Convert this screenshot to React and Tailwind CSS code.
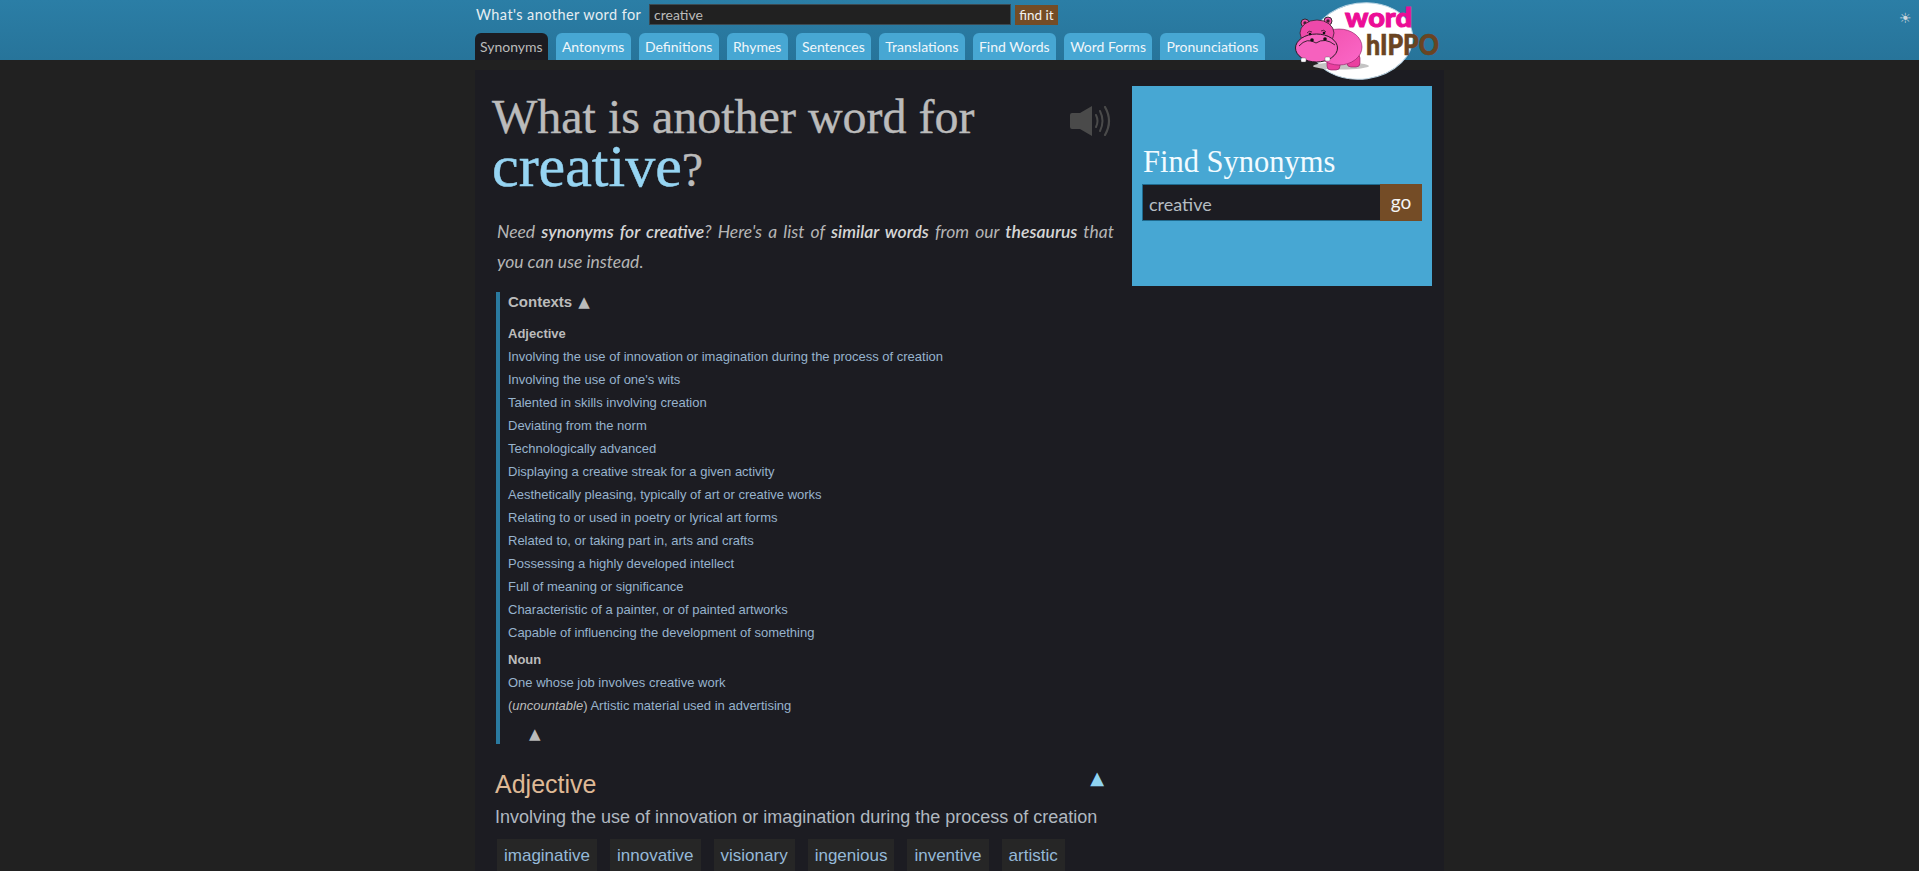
const tabs = ['Synonyms', 'Antonyms', 'Definitions', 'Rhymes', 'Sentences', 'Translations', 'Find Words', 'Word Forms', 'Pronunciations'];

const adjectiveContexts = [
  'Involving the use of innovation or imagination during the process of creation',
  "Involving the use of one's wits",
  'Talented in skills involving creation',
  'Deviating from the norm',
  'Technologically advanced',
  'Displaying a creative streak for a given activity',
  'Aesthetically pleasing, typically of art or creative works',
  'Relating to or used in poetry or lyrical art forms',
  'Related to, or taking part in, arts and crafts',
  'Possessing a highly developed intellect',
  'Full of meaning or significance',
  'Characteristic of a painter, or of painted artworks',
  'Capable of influencing the development of something',
];

const words = ['imaginative', 'innovative', 'visionary', 'ingenious', 'inventive', 'artistic'];

function Logo() {
  return (
    <svg viewBox="0 0 150 82" className="absolute left-[820px] top-[2px] z-10 h-[82px] w-[150px] overflow-visible">
      <defs>
        <linearGradient id="hippoPink" x1="0" y1="0" x2="1" y2="1">
          <stop offset="0" stopColor="#f050ac" />
          <stop offset="1" stopColor="#fb68c8" />
        </linearGradient>
      </defs>
      <ellipse cx="67" cy="39" rx="51" ry="38" fill="#ffffff" stroke="#b9d3e2" strokeWidth="1" transform="rotate(-8 67 39)" />
      <ellipse cx="46" cy="64" rx="28" ry="3.5" fill="#c4c4c4" />
      <rect x="32" y="54" width="13" height="14" rx="4" fill="#ea3f9f" stroke="#8a1d5f" strokeWidth="0.6" />
      <rect x="52" y="52" width="13" height="13" rx="4" fill="#ea3f9f" stroke="#8a1d5f" strokeWidth="0.6" />
      <ellipse cx="44" cy="45" rx="23" ry="18" fill="url(#hippoPink)" stroke="#8a1d5f" strokeWidth="0.6" />
      <circle cx="10" cy="21" r="4" fill="#f04fae" stroke="#222" strokeWidth="0.9" />
      <circle cx="33" cy="19" r="4" fill="#f04fae" stroke="#222" strokeWidth="0.9" />
      <circle cx="10" cy="21" r="1.7" fill="#3a2030" />
      <circle cx="33" cy="19" r="1.7" fill="#3a2030" />
      <ellipse cx="22" cy="31" rx="17" ry="13" fill="#ee49aa" stroke="#3a2030" strokeWidth="0.8" />
      <ellipse cx="21.5" cy="46" rx="21" ry="14" fill="#f661be" stroke="#2a1a25" strokeWidth="1" />
      <path d="M4 44 Q12 35 21 41 Q30 35 40 43" fill="none" stroke="#2a1a25" strokeWidth="0.9" />
      <path d="M12 31 Q14 28 17 30 M26 29 Q29 27 31 30" fill="none" stroke="#2a1a25" strokeWidth="0.8" />
      <circle cx="15" cy="32" r="1.3" fill="#111" />
      <circle cx="29" cy="31" r="1.3" fill="#111" />
      <circle cx="17" cy="38" r="1.8" fill="#111" />
      <circle cx="30" cy="37" r="1.8" fill="#111" />
      <rect x="6" y="56" width="5" height="4" rx="1" fill="#fff" stroke="#555" strokeWidth="0.4" />
      <rect x="30" y="55" width="5" height="4" rx="1" fill="#fff" stroke="#555" strokeWidth="0.4" />
      <text x="50" y="25" textLength="67" lengthAdjust="spacingAndGlyphs" fontFamily="Lato, sans-serif" fontWeight="900" fontSize="27" fill="#ec0d96" stroke="#ec0d96" strokeWidth="1">word</text>
      <text x="71" y="53" textLength="73" lengthAdjust="spacingAndGlyphs" fontFamily="Lato, sans-serif" fontWeight="900" fontSize="28" fill="#6a4422" stroke="#6a4422" strokeWidth="0.6">hIPPO</text>
    </svg>
  );
}

function SoundIcon() {
  return (
    <svg viewBox="0 0 43 30" className="mt-[20px] h-[30px] w-[43px] shrink-0" fill="none" stroke="#4a4a4a" strokeLinecap="round">
      <path d="M2 7 H10 L22 0 V30 L10 23 H2 Q0 23 0 21 V9 Q0 7 2 7 Z" fill="#4a4a4a" stroke="none" />
      <path d="M26 9 Q29 15 26 21" strokeWidth="2" />
      <path d="M30 5 Q35 15 30 25" strokeWidth="2" />
      <path d="M35 1 Q43 15 35 29" strokeWidth="2.2" />
    </svg>
  );
}

export default function App() {
  return (
    <div className="h-screen overflow-hidden bg-[#212121] font-['Liberation_Sans',sans-serif]">
      <header className="h-[60px] bg-gradient-to-b from-[#2b7ea6] to-[#27749a]">
        <div className="relative mx-auto h-full w-[969px] font-['Lato',sans-serif]">
          <div className="flex h-[33px] items-start pl-px pt-[4px]">
            <span className="w-[173px] shrink-0 pt-px text-[14.5px] leading-[20px] tracking-[0.42px] text-[#e6eef2]">What's another word for</span>
            <input
              readOnly
              value="creative"
              className="h-[21px] w-[362px] border border-[#3b4a52] bg-[#212121] px-[4px] text-[14px] text-[#bbbbbb] outline-none"
            />
            <button className="ml-[4px] mt-px h-[20px] w-[43px] bg-[#744c26] text-[13.5px] leading-[20px] text-[#f2f2f2]">find it</button>
          </div>
          <nav className="flex gap-[8px]">
            {tabs.map((tab, index) => (
              <a
                key={tab}
                className={`flex h-[27px] items-center rounded-t-[6px] text-[14px] ${
                  index === 0 ? 'bg-[#1c1c22] px-[5px] text-[#bbbbbb]' : 'bg-[#47a7d3] px-[6.25px] text-[#f0f6fa]'
                }`}
              >
                {tab}
              </a>
            ))}
          </nav>
          <Logo />
        </div>
        <span className="absolute left-[1899px] top-[9px] font-['DejaVu_Sans',sans-serif] text-[14px] leading-[18px] text-[#ccd6dc]">☀</span>
      </header>

      <main className="pt-[10px]">
        <div className="mx-auto flex w-[969px] items-start gap-[18px] bg-[#1c1c22] pl-[17px] pt-[16px]">
          <div className="w-[622px] shrink-0">
            <div className="flex justify-between pr-px">
              <h1 className="pt-[3px] font-['Liberation_Serif',serif] text-[48px] font-normal leading-[55px] text-[#bbbbbb] [-webkit-text-stroke:0.4px_#bbbbbb]">
                <span className="block">What is another word for</span>
                <span className="block text-[48px] leading-[44px]">
                  <span className="text-[60px] text-[#96d4f2] [-webkit-text-stroke:0.5px_#96d4f2]">creative</span>?
                </span>
              </h1>
              <SoundIcon />
            </div>

            <p className="mt-[25px] pl-[5px] font-['Lato',sans-serif] text-[17.5px] italic leading-[30px] text-[#b5b5b5]">
              <span className="block text-justify [text-align-last:justify]">
                Need <b className="font-semibold text-[#d5d5d5]">synonyms for creative</b>? Here's a list of{' '}
                <b className="font-semibold text-[#d5d5d5]">similar words</b> from our{' '}
                <b className="font-semibold text-[#d5d5d5]">thesaurus</b> that
              </span>
              <span className="block">you can use instead.</span>
            </p>

            <section className="ml-[4px] mt-[15px] h-[452px] border-l-4 border-[#2a7aa0] pl-[8px] text-[13px] leading-[23px] text-[#97b3cd]">
              <div className="text-[15px] font-bold leading-[19px] text-[#bbbbbb]">
                Contexts <span className="ml-[2px] font-['DejaVu_Sans',sans-serif] font-normal">▲</span>
              </div>
              <div className="mt-[10px] font-bold text-[#bbbbbb]">Adjective</div>
              {adjectiveContexts.map((line) => (
                <div key={line}>{line}</div>
              ))}
              <div className="mt-[4px] font-bold text-[#bbbbbb]">Noun</div>
              <div>One whose job involves creative work</div>
              <div>
                <span className="text-[#bbbbbb]">(<i>uncountable</i>)</span> Artistic material used in advertising
              </div>
              <div className="mt-[6px] pl-[21px] font-['DejaVu_Sans',sans-serif] text-[15px] text-[#bbbbbb]">▲</div>
            </section>

            <section className="mt-[24px] pl-[3px]">
              <div className="flex items-center justify-between pr-[10px]">
                <h2 className="text-[25px] font-normal leading-[30px] text-[#dfb995]">Adjective</h2>
                <span className="mb-[12px] font-['DejaVu_Sans',sans-serif] text-[18px] leading-[20px] text-[#8fd3f2]">▲</span>
              </div>
              <p className="mt-[4px] text-[18px] leading-[26px] text-[#b0b8c0]">
                Involving the use of innovation or imagination during the process of creation
              </p>
              <div className="ml-[2px] mt-[9px] flex gap-[13px]">
                {words.map((word) => (
                  <a key={word} className="bg-[#262626] px-[7px] py-[6px] text-[17px] leading-[21px] text-[#95b9d8]">
                    {word}
                  </a>
                ))}
              </div>
            </section>
          </div>

          <aside className="flex h-[200px] w-[300px] shrink-0 flex-col bg-[#47a7d3] pl-[10px]">
            <h3 className="mt-[55px] pl-[1px] font-['Liberation_Serif',serif] text-[30.5px] font-normal leading-[43px] text-[#f2fbff]">Find Synonyms</h3>
            <div className="flex h-[37px] w-[280px] border border-[#1f6a8e] bg-[#1c1c22] font-['Lato',sans-serif]">
              <input readOnly value="creative" className="min-w-0 flex-1 bg-transparent px-[6px] pt-[3px] text-[18px] text-[#b5bcc2] outline-none" />
              <button className="-m-px w-[42px] bg-[#744c26] text-[19px] text-[#f5f5f5]">go</button>
            </div>
          </aside>
        </div>
      </main>
    </div>
  );
}
